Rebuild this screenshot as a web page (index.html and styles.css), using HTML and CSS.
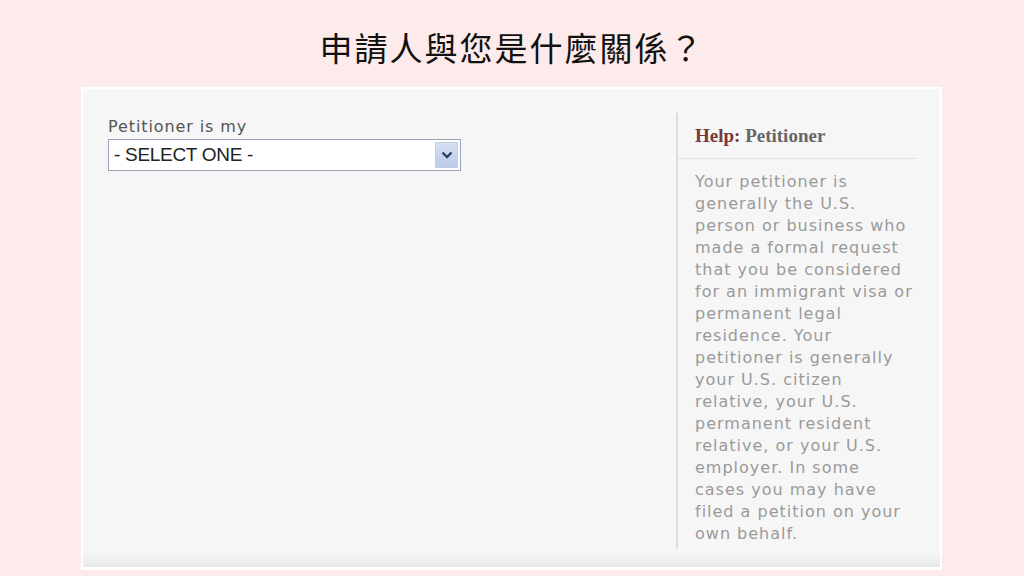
FILE: index.html
```html
<!DOCTYPE html>
<html lang="zh-Hant">
<head>
    <meta charset="UTF-8">
    <title>申請人與您是什麼關係？</title>
    <link rel="stylesheet" href="styles.css">
</head>
<body>
    <h1 class="page-title">申請人與您是什麼關係？</h1>

    <div class="form-panel">
        <div class="form-main">
            <label class="field-label" for="petitioner">Petitioner is my</label>
            <div class="select-box">
                <span class="select-value">- SELECT ONE -</span>
                <span class="select-arrow">
                    <svg width="12" height="8" viewBox="0 0 12 8">
                        <path d="M1.5 1.5 L6 6 L10.5 1.5" fill="none" stroke="#2d3f6b" stroke-width="2.4"/>
                    </svg>
                </span>
            </div>
        </div>

        <div class="help-col">
            <h3 class="help-title"><span class="help-word">Help:</span> Petitioner</h3>
            <p class="help-text">Your petitioner is generally the U.S. person or business who made a formal request that you be considered for an immigrant visa or permanent legal residence. Your petitioner is generally your U.S. citizen relative, your U.S. permanent resident relative, or your U.S. employer. In some cases you may have filed a petition on your own behalf.</p>
        </div>
    </div>
</body>
</html>
```

FILE: styles.css
```css
* {
    margin: 0;
    padding: 0;
    box-sizing: border-box;
}

body {
    background-color: #fdeaea;
    font-family: "Noto Sans CJK TC", "Noto Sans", sans-serif;
    width: 1024px;
    height: 576px;
    overflow: hidden;
}

.page-title {
    font-family: "Noto Sans CJK TC", sans-serif;
    font-size: 33px;
    font-weight: 400;
    color: #111;
    text-align: center;
    height: 87px;
    padding-top: 24px;
    line-height: 46px;
    letter-spacing: 2px;
}

.form-panel {
    margin-left: 81px;
    width: 861px;
    height: 483px;
    background-color: #f6f6f6;
    border: 2px solid #ffffff;
    border-bottom: 3px solid #ffffff;
    display: flex;
    box-shadow: inset 0 -14px 10px -8px #e6e6e8;
}

.form-main {
    width: 593px;
    padding: 29px 0 0 25px;
}

.field-label {
    display: block;
    font-family: "DejaVu Sans", Verdana, sans-serif;
    font-size: 16px;
    letter-spacing: 0.9px;
    color: #555;
    line-height: 18px;
    margin-bottom: 3px;
}

.select-box {
    width: 353px;
    height: 32px;
    background-color: #ffffff;
    border: 1px solid #9aa3b5;
    display: flex;
    align-items: center;
    justify-content: space-between;
    padding: 0 2px 0 5px;
}

.select-value {
    font-family: "Liberation Sans", Arial, sans-serif;
    font-size: 19px;
    letter-spacing: -0.3px;
    color: #222;
}

.select-arrow {
    width: 23px;
    height: 26px;
    background: linear-gradient(#d6e0f2, #bccbe6);
    border: 1px solid #c4cfe3;
    display: flex;
    align-items: center;
    justify-content: center;
}

.help-col {
    margin-top: 24px;
    height: 436px;
    width: 240px;
    border-left: 2px solid #dedede;
}

.help-title {
    font-family: "Liberation Serif", "Times New Roman", serif;
    font-size: 19px;
    font-weight: bold;
    color: #666;
    padding: 12px 0 11px 17px;
    border-bottom: 1px solid #e2e2e2;
    margin-bottom: 12px;
}

.help-word {
    color: #7a3838;
}

.help-text {
    font-family: "DejaVu Sans", Verdana, sans-serif;
    font-size: 16px;
    letter-spacing: 1px;
    line-height: 22px;
    color: #9a9a9a;
    padding-left: 17px;
    width: 236px;
}
```
